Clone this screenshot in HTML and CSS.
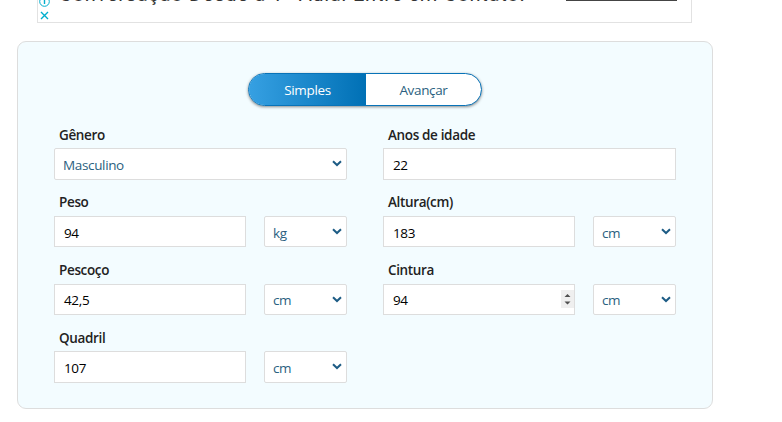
FILE: index.html
```html
<!DOCTYPE html>
<html lang="pt">
<head>
<meta charset="utf-8">
<title>Calculadora</title>
<link rel="stylesheet" href="styles.css">
</head>
<body>
<div class="ad">
  <div class="ad-marks">
    <svg width="11" height="22" viewBox="0 0 11 22" fill="none" stroke="#00aecd"><circle cx="5.5" cy="1.5" r="4.8"/><path d="M5.5 0v4" stroke-width="1.4"/><path d="M2 12l7 7M9 12l-7 7" stroke-width="1.4"/></svg>
  </div>
  <div class="ad-text">Conversação Desde a 1ª Aula. Entre em Contato.</div>
  <div class="ad-button"></div>
</div>
<main class="card">
  <div class="toggle"><div class="tab active">Simples</div><div class="tab">Avançar</div></div>
  <div class="fields">
    <div class="field"><label><span>Gênero</span></label><div class="controls"><div class="box select wide"><span>Masculino</span><svg class="chev" viewBox="0 0 10 7"><path d="M1 1.2L5 5L9 1.2"/></svg></div></div></div>
    <div class="field"><label><span>Anos de idade</span></label><div class="controls"><div class="box"><span>22</span></div></div></div>
    <div class="field"><label><span>Peso</span></label><div class="controls"><div class="box"><span>94</span></div><div class="box select unit"><span>kg</span><svg class="chev" viewBox="0 0 10 7"><path d="M1 1.2L5 5L9 1.2"/></svg></div></div></div>
    <div class="field"><label><span>Altura(cm)</span></label><div class="controls"><div class="box"><span>183</span></div><div class="box select unit"><span>cm</span><svg class="chev" viewBox="0 0 10 7"><path d="M1 1.2L5 5L9 1.2"/></svg></div></div></div>
    <div class="field"><label><span>Pescoço</span></label><div class="controls"><div class="box"><span>42,5</span></div><div class="box select unit"><span>cm</span><svg class="chev" viewBox="0 0 10 7"><path d="M1 1.2L5 5L9 1.2"/></svg></div></div></div>
    <div class="field"><label><span>Cintura</span></label><div class="controls"><div class="box"><span>94</span><svg class="spinner" width="13" height="18" viewBox="0 0 13 18"><path fill="#efefef" d="M0 0h13v18H0z"/><path fill="#505050" d="M3.5 7L6.5 4L9.5 7zM3.5 11.5h6l-3 3z"/></svg></div><div class="box select unit"><span>cm</span><svg class="chev" viewBox="0 0 10 7"><path d="M1 1.2L5 5L9 1.2"/></svg></div></div></div>
    <div class="field"><label><span>Quadril</span></label><div class="controls"><div class="box"><span>107</span></div><div class="box select unit"><span>cm</span><svg class="chev" viewBox="0 0 10 7"><path d="M1 1.2L5 5L9 1.2"/></svg></div></div></div>
  </div>
</main>
</body>
</html>
```
FILE: styles.css
```css
* { box-sizing: border-box; }
body {
  margin: 0;
  background: #fff;
  font-family: "Open Sans", "Noto Sans", sans-serif;
  font-size: 13.5px;
  letter-spacing: -.35px;
  overflow: hidden;
}
.ad {
  display: flex;
  width: 655px;
  height: 23px;
  margin-left: 37px;
  border: 1px solid #e2e2e2;
  border-top: 0;
  overflow: hidden;
}
.ad-marks { width: 21px; padding-left: 1px; }
.ad-marks svg { display: block; }
.ad-text {
  width: 507px;
  margin-top: -20px;
  font: 20px/28px Roboto, sans-serif;
  letter-spacing: .72px;
  white-space: nowrap;
  color: #333;
}
.ad-button { width: 111px; height: 1px; background: #444; }
.card {
  width: 696px;
  height: 368px;
  margin: 18px 0 0 17px;
  padding: 31px 36px 0;
  border: 1px solid #ddd;
  border-radius: 9px;
  background: #f3fcff;
}
.toggle {
  display: flex;
  width: 234px;
  height: 33px;
  margin: 0 auto;
  border: 1px solid #0873b8;
  border-radius: 17px;
  background: #fff;
  box-shadow: 0 1px 3px rgba(0, 0, 0, .45);
  overflow: hidden;
}
.tab {
  flex: 1;
  text-align: center;
  line-height: 33px;
  color: #2b5f80;
}
.tab.active {
  flex: 0 0 117px;
  color: #fff;
  background: linear-gradient(90deg, #36a0e2, #0070b5);
}
.fields {
  display: grid;
  grid-template-columns: 293px 293px;
  column-gap: 36px;
  grid-auto-rows: 67.7px;
  margin-top: 18.2px;
}
.field label {
  display: block;
  height: 24px;
  padding: .4px 0 0 5px;
  line-height: 21.4px;
  font-weight: 550;
  color: #222;
}
.controls { display: flex; gap: 18px; }
.box {
  display: flex;
  flex: 1;
  align-items: center;
  height: 31.4px;
  padding-left: 9px;
  border: 1px solid #ddd;
  background: #fff;
  color: #000;
}
.box span { position: relative; top: 1px; }
.select { justify-content: space-between; border-radius: 2px; color: #2b5f80; padding: 0 4px 0 8px; }
.unit { flex: 0 0 83px; }
.chev {
  width: 10px;
  height: 7px;
  fill: none;
  stroke: #1d5c85;
  stroke-width: 2;
}
.spinner { margin-left: auto; }
```
